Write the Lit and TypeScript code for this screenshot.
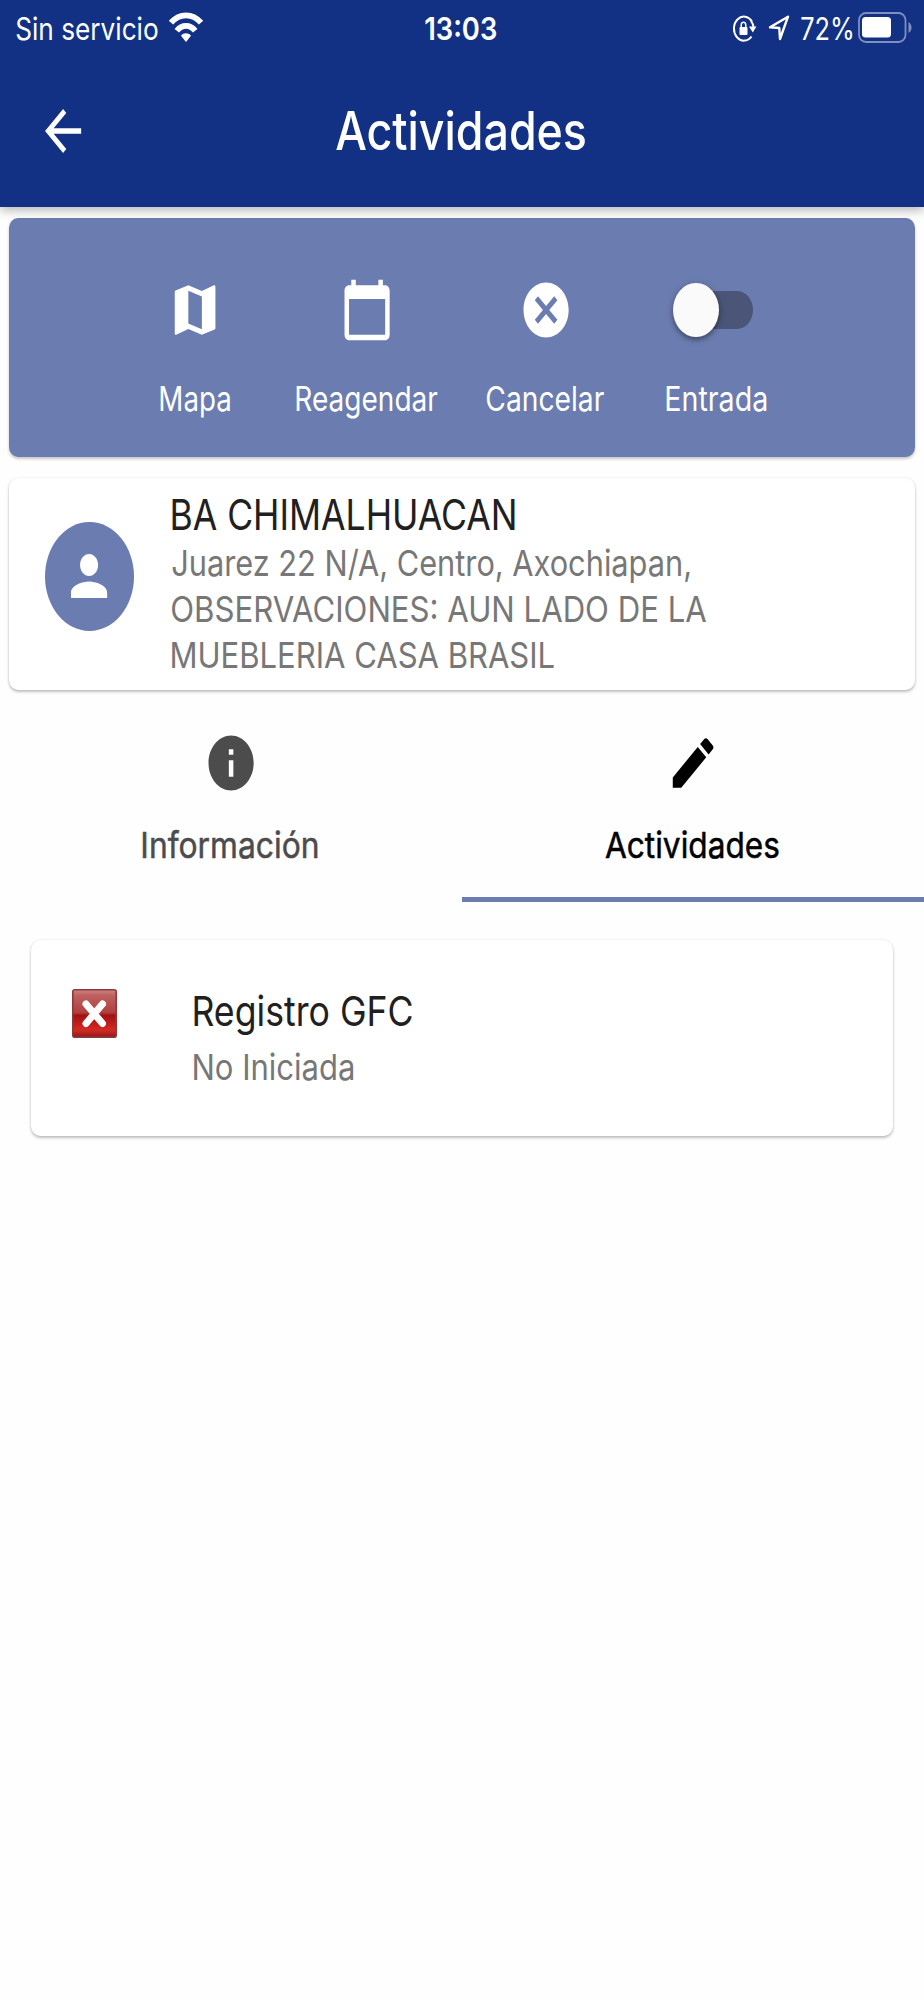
import { LitElement, html, css, svg } from "lit";
import { customElement, property, query } from "lit/decorators.js";

const ICONS: Record<string, unknown> = {
  back: svg`<path d="M20 11H7.83l5.59-5.59L12 4l-8 8 8 8 1.41-1.41L7.83 13H20v-2z"/>`,
  map: svg`<path d="M20.5 3l-.16.03L15 5.1 9 3 3.36 4.9c-.21.07-.36.25-.36.48V20.5c0 .28.22.5.5.5l.16-.03L9 18.9l6 2.1 5.64-1.9c.21-.07.36-.25.36-.48V3.5c0-.28-.22-.5-.5-.5zM15 19l-6-2.11V5l6 2.11V19z"/>`,
  calendar: svg`<path d="M20 3h-1V1h-2v2H7V1H5v2H4c-1.1 0-2 .9-2 2v16c0 1.1.9 2 2 2h16c1.1 0 2-.9 2-2V5c0-1.1-.9-2-2-2zm0 18H4V8h16v13z"/>`,
  cancel: svg`<path d="M12 2C6.47 2 2 6.47 2 12s4.47 10 10 10 10-4.47 10-10S17.53 2 12 2zm5 13.59L15.59 17 12 13.41 8.41 17 7 15.59 10.59 12 7 8.41 8.41 7 12 10.59 15.59 7 17 8.41 13.41 12 17 15.59z"/>`,
  person: svg`<path d="M12 12c2.21 0 4-1.79 4-4s-1.79-4-4-4-4 1.79-4 4 1.79 4 4 4zm0 2c-2.67 0-8 1.34-8 4v2h16v-2c0-2.66-5.33-4-8-4z"/>`,
  info: svg`<path d="M12 2C6.48 2 2 6.48 2 12s4.48 10 10 10 10-4.48 10-10S17.52 2 12 2zm1 15h-2v-6h2v6zm0-8h-2V7h2v2z"/>`,
  edit: svg`<path d="M3 17.25V21h3.75L17.81 9.94l-3.75-3.75L3 17.25zM20.71 7.04c.39-.39.39-1.02 0-1.41l-2.34-2.34c-.39-.39-1.02-.39-1.41 0l-1.83 1.83 3.75 3.75 1.83-1.83z"/>`,
};

/** Material glyph drawn in a 22pt box with the screen's taller vertical scale. */
@customElement("md-icon")
class MdIcon extends LitElement {
  @property() name = "";
  static styles = css`
    :host { display: block; width: 54.2px; height: 66px; }
    svg { display: block; width: 100%; height: 100%; fill: currentColor; }
  `;
  render() {
    return html`<svg viewBox="0 0 24 24" preserveAspectRatio="none">${ICONS[this.name]}</svg>`;
  }
}

/** One line of text condensed so that its ink spans exactly \`width\` pixels. */
@customElement("fit-text")
class FitText extends LitElement {
  @property({ type: Number }) width = 100;
  @query("span") span!: HTMLSpanElement;
  static styles = css`
    :host { display: block; white-space: nowrap; }
    span { display: inline-block; transform-origin: 0 50%; vertical-align: top; }
  `;
  render() {
    return html`<span><slot></slot></span>`;
  }
  async firstUpdated() {
    this.fit();
    await document.fonts.ready;
    this.fit();
  }
  fit() {
    const cs = getComputedStyle(this);
    const ctx = document.createElement("canvas").getContext("2d")!;
    ctx.font = `${cs.fontWeight} ${cs.fontSize} ${cs.fontFamily}`;
    const m = ctx.measureText((this.textContent || "").trim());
    const k = this.width / (m.actualBoundingBoxLeft + m.actualBoundingBoxRight);
    this.style.width = `${this.width}px`;
    this.span.style.transform = `translateX(${m.actualBoundingBoxLeft * k}px) scaleX(${k})`;
  }
}

@customElement("app-root")
class AppRoot extends LitElement {
  static styles = css`
    :host {
      display: block; width: 924px; height: 2000px; overflow: hidden;
      background: #fefefe; font-family: Inter, "Liberation Sans", sans-serif; color: #202020;
    }
    * { box-sizing: border-box; }
    svg { display: block; }
    header {
      height: 206.5px; background: #123185; color: #fff; position: relative;
      box-shadow: 0 3px 10px rgba(0, 0, 0, 0.3);
    }
    .status { display: grid; grid-template-columns: 425px 71.5px 1fr; height: 59px; padding: 0 12px 0 0; font-size: 31.4px; line-height: 59px; }
    .left, .right { display: flex; }
    .left { padding-left: 15.5px; }
    .right { justify-content: flex-end; }
    .time { font-weight: 600; }
    .wifi { margin: 11.5px 0 0 11.5px; }
    .lock { margin: 15px 11px 0 0; }
    .loc { margin: 15px 10.5px 0 0; }
    .bat { margin: 12px 0 0 6px; }
    .bar { display: grid; grid-template-columns: 335.5px 1fr; height: 144px; align-items: center; }
    .bar md-icon { margin-left: 35.7px; }
    .title { font-size: 53.4px; font-weight: 500; line-height: 66px; }
    .actions {
      display: flex; margin: 11px 9px 0; height: 239px; border-radius: 9px / 10px;
      background: #6b7cb0; color: #fff; padding: 59.5px 0 0 151px;
      font-size: 34px; line-height: 44px; box-shadow: 0 2px 3px rgba(0, 0, 0, 0.22);
    }
    .act { display: flex; flex-direction: column; align-items: center; gap: 33.5px; }
    .act + .act { margin-left: var(--gap); }
    .g1 { --gap: 66px; }
    .g2 { --gap: 49px; }
    .g3 { --gap: 61px; }
    .switch { display: grid; width: 80px; height: 66px; align-items: center; margin-left: -5px; }
    .track { grid-area: 1 / 1; height: 38px; margin-left: 8px; border-radius: 16px / 19px; background: #4a5578; }
    .knob {
      grid-area: 1 / 1; width: 45.5px; height: 54.5px; border-radius: 50%; background: #fafafa; z-index: 1;
      box-shadow: 0 3px 5px rgba(0, 0, 0, 0.35), 0 1px 8px rgba(0, 0, 0, 0.12);
    }
    .card {
      display: flex; background: #fff; border-radius: 9px / 10px;
      box-shadow: 0 2px 3px rgba(0, 0, 0, 0.24), 0 0 2px rgba(0, 0, 0, 0.12);
    }
    .client { margin: 21.5px 9px 0; height: 212px; padding-left: 36px; }
    .avatar {
      width: 89px; height: 109.5px; margin-top: 43.5px; border-radius: 50%;
      background: #6b7cb0; color: #fff; display: grid; place-items: center;
    }
    .lines { margin-left: 37.7px; padding-top: 9px; }
    .name { font-size: 42px; line-height: 56px; margin-bottom: -3px; }
    .addr { font-size: 36px; line-height: 46px; color: #777; }
    .tabs { display: grid; grid-template-columns: 1fr 1fr; height: 212px; }
    .tab {
      display: flex; flex-direction: column; align-items: center; gap: 26px; padding-top: 39.5px;
      color: #4c4c4c; font-size: 36px; line-height: 46px; border-bottom: 5.5px solid transparent;
      -webkit-text-stroke: 0.5px currentColor;
    }
    .tab fit-text { margin-left: -2px; }
    .on { color: #000; border-color: #6b7cb0; }
    .task { margin: 38px 31px 0; height: 196px; padding-left: 40.5px; }
    .flag { margin-top: 48.5px; }
    .info { margin-left: 77.5px; padding-top: 43px; }
    .tname { font-size: 41.5px; line-height: 56px; }
    .state { font-size: 36px; line-height: 46px; margin-top: 5px; color: #777; }
  `;

  render() {
    return html`
      <header>
        <div class="status">
          <div class="left">
            <fit-text width="142">Sin servicio</fit-text>
            <svg class="wifi" width="34" height="31" viewBox="0 0 34 31">
              <g fill="none" stroke="#fff" stroke-width="5.8">
                <path d="M2 10.7C10.5 .8 23.500 .8 32 10.700"/>
                <path d="M7.800 18.800C13 12.300 21 12.300 26.200 18.800"/>
              </g>
              <path d="M17 30l-5-6.300c2.800-3.200 7.200-3.200 10 0z" fill="#fff"/>
            </svg>
          </div>
          <fit-text class="time" width="71.5">13:03</fit-text>
          <div class="right">
            <svg class="lock" width="25" height="28" viewBox="0 0 25 28">
              <path d="M20 6.500A10 12 0 1 0 19.500 21.500" fill="none" stroke="#fff" stroke-width="2"/>
              <path d="M19 6Q21.300 9 21.500 12" fill="none" stroke="#fff" stroke-width="2"/>
              <path d="M17 11.500h7.500l-3.700 6z" fill="#fff"/>
              <rect x="7.500" y="12" width="8" height="8" rx="1" fill="#fff"/>
              <path d="M9.200 12.500v-2.200c0-4 4.600-4 4.600 0v2.200" fill="none" stroke="#fff" stroke-width="1.500"/>
            </svg>
            <svg class="loc" width="22" height="26" viewBox="0 0 22 26">
              <path d="M20 1.700L2 12.300l9.300.7.700 11z" fill="none" stroke="#fff" stroke-width="2.400" stroke-linejoin="round"/>
            </svg>
            <fit-text width="51.5">72%</fit-text>
            <svg class="bat" width="54" height="31" viewBox="0 0 54 31">
              <rect x="1" y="1" width="46.500" height="29" rx="7" fill="none" stroke="#8090bd" stroke-width="1.800"/>
              <rect x="4" y="5" width="29" height="20.500" rx="3.500" fill="#fff"/>
              <path d="M50.500 10v11q3-2 3-5.500t-3-5.500z" fill="#8090bd"/>
            </svg>
          </div>
        </div>
        <div class="bar">
          <md-icon name="back"></md-icon>
          <fit-text class="title" width="249.500">Actividades</fit-text>
        </div>
      </header>
      <section class="actions">
        <div class="act"><md-icon name="map"></md-icon><fit-text width="70">Mapa</fit-text></div>
        <div class="act g1"><md-icon name="calendar"></md-icon><fit-text width="142">Reagendar</fit-text></div>
        <div class="act g2"><md-icon name="cancel"></md-icon><fit-text width="117.500">Cancelar</fit-text></div>
        <div class="act g3">
          <div class="switch"><div class="track"></div><div class="knob"></div></div>
          <fit-text width="100.500">Entrada</fit-text>
        </div>
      </section>
      <section class="card client">
        <div class="avatar"><md-icon name="person"></md-icon></div>
        <div class="lines">
          <fit-text class="name" width="342.500">BA CHIMALHUACAN</fit-text>
          <fit-text class="addr" width="518">Juarez 22 N/A, Centro, Axochiapan,</fit-text>
          <fit-text class="addr" width="534">OBSERVACIONES: AUN LADO DE LA</fit-text>
          <fit-text class="addr" width="382">MUEBLERIA CASA BRASIL</fit-text>
        </div>
      </section>
      <nav class="tabs">
        <div class="tab"><md-icon name="info"></md-icon><fit-text width="174.500">Información</fit-text></div>
        <div class="tab on"><md-icon name="edit"></md-icon><fit-text width="174">Actividades</fit-text></div>
      </nav>
      <section class="card task">
        <svg class="flag" width="45" height="49" viewBox="0 0 45 49">
          <defs>
            <linearGradient id="r" x1="0" y1="0" x2="0" y2="1">
              <stop offset="0" stop-color="#cc8585"/><stop offset=".12" stop-color="#c06060"/>
              <stop offset=".48" stop-color="#b04040"/><stop offset=".54" stop-color="#a31212"/>
              <stop offset=".85" stop-color="#d32a22"/><stop offset="1" stop-color="#8a1a1a"/>
            </linearGradient>
          </defs>
          <rect x=".8" y=".8" width="43.400" height="47.400" rx="2" fill="url(#r)" stroke="#8c3a3c" stroke-width="1.600"/>
          <path d="M14 15l16.500 19.500M30.500 15l-16.500 19.500" stroke="#fff" stroke-width="7" stroke-linecap="round"/>
        </svg>
        <div class="info">
          <fit-text class="tname" width="218.500">Registro GFC</fit-text>
          <fit-text class="state" width="159.500">No Iniciada</fit-text>
        </div>
      </section>
    `;
  }
}
